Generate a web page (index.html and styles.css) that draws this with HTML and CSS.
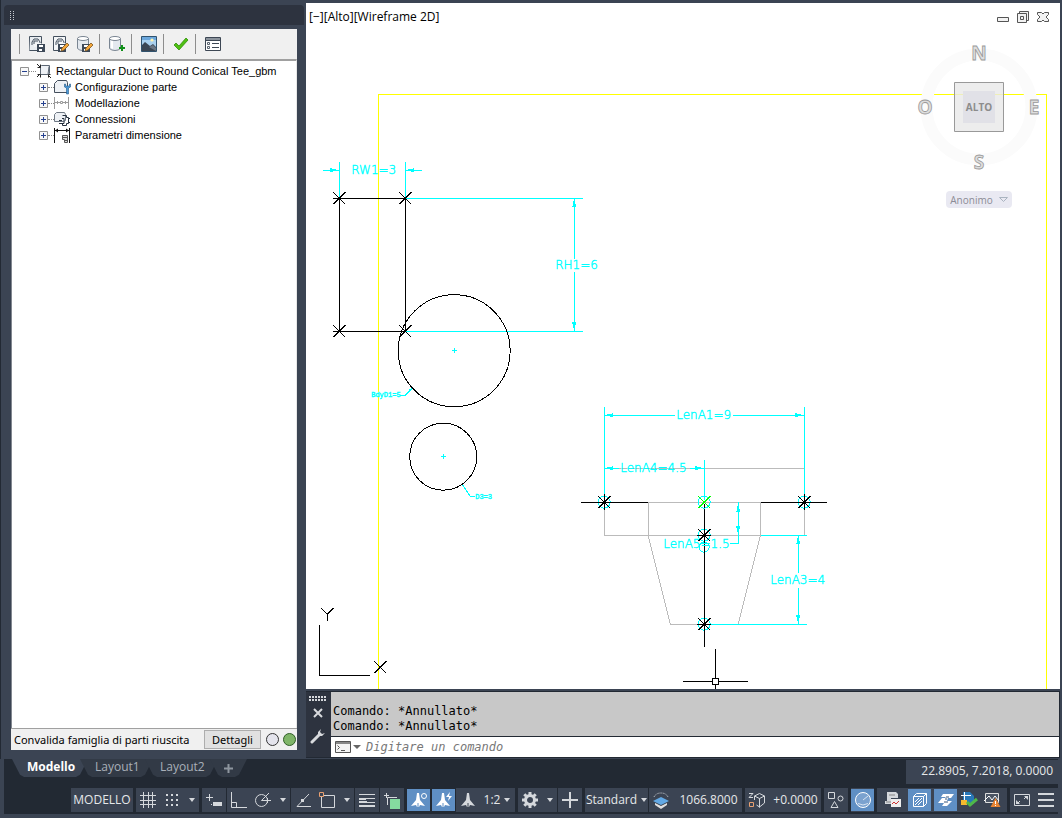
FILE: index.html
```html
<!DOCTYPE html>
<html lang="it">
<head>
<meta charset="utf-8">
<title>Editor parti</title>
<link rel="stylesheet" href="styles.css">
</head>
<body>
<main class="workspace">
  <aside class="palette">
    <div class="palette-title">
      <svg width="4" height="10" viewBox="0 0 4 10" fill="#c8ccd2"><path d="M0 0h1v1H0zM3 0h1v1H3zM0 2h1v1H0zM3 2h1v1H3zM0 4h1v1H0zM3 4h1v1H3zM0 6h1v1H0zM3 6h1v1H3zM0 8h1v1H0zM3 8h1v1H3z"/></svg>
    </div>
    <div class="palette-body">
      <div class="toolbar">
        <span class="sep"></span>
        <button class="tool" aria-label="Salva famiglia"><svg width="16" height="16" viewBox="0 0 16 16"><path d="M.5 14.500V.5h12v7" fill="#f4f6f8" stroke="#44505e"/><path d="M.5 14.500H8V11H5V7h7V1H1z" fill="#e9edf1"/><path d="M.5 14.500H8M3 9V6l2-3h4l2 3v1M5 8V5h4" fill="none" stroke="#44505e"/><path d="M8 8h8v8H8z" fill="#3d4958"/><path d="M10 9h4v2h-4zM10 13h3v2h-3z" fill="#fff"/></svg></button>
        <button class="tool" aria-label="Salva con nome"><svg width="16" height="16" viewBox="0 0 16 16"><path d="M.5 14.500V.5h12v7" fill="#f4f6f8" stroke="#44505e"/><path d="M.5 14.500H5M3 9V6l2-3h4l2 3v1M5 8V5h4" fill="none" stroke="#44505e"/><path d="M5 8h8v8H5z" fill="#3d4958"/><path d="M7 9h4v2H7zM7 13h3v2H7z" fill="#fff"/><path d="M9 12l5-5 2 2-5 5-3 1z" fill="#f4a63a" stroke="#7a5420" stroke-width=".8"/></svg></button>
        <button class="tool" aria-label="Salva copia catalogo"><svg width="16" height="16" viewBox="0 0 16 16"><path d="M.5 2.500v10q2 2 5 2h6v-12" fill="#e3e8ee" stroke="#7a8592"/><ellipse cx="6" cy="2.500" rx="5.500" ry="2" fill="#fff" stroke="#7a8592"/><path d="M5 8h8v8H5z" fill="#3d4958"/><path d="M7 9h4v2H7zM7 13h3v2H7z" fill="#fff"/><path d="M9 12l5-5 2 2-5 5-3 1z" fill="#f4a63a" stroke="#7a5420" stroke-width=".8"/></svg></button>
        <span class="sep"></span>
        <button class="tool" aria-label="Aggiungi dimensione"><svg width="16" height="16" viewBox="0 0 16 16"><path d="M.5 2.500v10q2 2 5.500 2t5.500-2v-10" fill="#e3e8ee" stroke="#7a8592"/><path d="M2 4v8l2 1V5z" fill="#fff"/><ellipse cx="6" cy="2.500" rx="5.500" ry="2" fill="#fff" stroke="#7a8592"/><path d="M12 9h2v2h2v2h-2v2h-2v-2h-2v-2h2z" fill="#109018"/></svg></button>
        <span class="sep"></span>
        <button class="tool" aria-label="Genera bitmap"><svg width="16" height="16" viewBox="0 0 16 16"><path d="M.5 .5h15v15H.5z" fill="#a9d0ee" stroke="#31536e"/><path d="M1 1h14v3H1z" fill="#6ba7dc"/><circle cx="11" cy="4" r="1.600" fill="#fff3b0"/><path d="M1 9l3-3 5 4 3-2 3 3v4H1z" fill="#3b4653"/><path d="M8 11l4-2 3 3v3z" fill="#6b7683"/></svg></button>
        <span class="sep"></span>
        <button class="tool" aria-label="Convalida"><svg width="16" height="16" viewBox="0 0 16 16"><path d="M1 9l2-2 3 3 7-8 2 2-9 10z" fill="#4fc012" stroke="#2f9108" stroke-width=".8"/></svg></button>
        <span class="sep"></span>
        <button class="tool" aria-label="Opzioni"><svg width="16" height="16" viewBox="0 0 16 16"><path d="M.5 1.500h15v13H.5z" fill="#fff" stroke="#3d4754"/><path d="M1 2h14v2H1z" fill="#8b939c"/><path d="M1 4.500h14" stroke="#3d4754"/><path d="M2.500 6.500h2v2h-2zM2.500 10.500h2v2h-2z" fill="#fff" stroke="#59636f"/><path d="M7 7.500h7M7 11.500h7" stroke="#3d4754"/></svg></button>
      </div>
      <div class="tree-box">
        <ul class="tree">
          <li>
            <div class="node"><button class="twist" aria-label="Comprimi"><svg width="9" height="9" viewBox="0 0 9 9"><path d="M.5 .5h8v8h-8z" fill="#f8f8f8" stroke="#919191"/><path d="M2 4.500h5" stroke="#26418f"/></svg></button><span class="dots"></span>
              <svg width="17" height="16" viewBox="0 0 17 16"><path d="M4.500 3.500l1-1h8v8l-2 1h-7z" fill="#eef1f5" stroke="#5c6774"/><path d="M5 11.500h7l1-8" fill="none" stroke="#5c6774"/><path d="M1 1l3 3M1 14l3-3M15 15l-3-3M1.500 4.500h3v-3M1.500 11.500h3v3M14.500 11.500h-2v3" fill="none" stroke="#222"/></svg>
              <span class="name">Rectangular Duct to Round Conical Tee_gbm</span></div>
            <ul class="branch">
              <li class="node"><button class="twist" aria-label="Espandi"><svg width="9" height="9" viewBox="0 0 9 9"><path d="M.5 .5h8v8h-8z" fill="#f8f8f8" stroke="#919191"/><path d="M2 4.500h5M4.500 2v5" stroke="#26418f"/></svg></button><span class="dots short"></span>
                <svg width="17" height="16" viewBox="0 0 17 16"><path d="M.5 4.500l3-3h9l1 2v10H.5z" fill="#eef1f5" stroke="#444f5c"/><path d="M10.500 5v3l2 1v6h2V9l2-1V5h-1v2h-4V5z" fill="#4d9bd8" stroke="#245a8b" stroke-width=".6"/></svg>
                <span class="name">Configurazione parte</span></li>
              <li class="node"><button class="twist" aria-label="Espandi"><svg width="9" height="9" viewBox="0 0 9 9"><path d="M.5 .5h8v8h-8z" fill="#f8f8f8" stroke="#919191"/><path d="M2 4.500h5M4.500 2v5" stroke="#26418f"/></svg></button><span class="dots short"></span>
                <svg width="17" height="16" viewBox="0 0 17 16"><path d="M.5 2v12M14.500 2v12M1 7.500h5M9 7.500h5M3.500 6v3M11.500 6v3M6.500 6.500h2v2h-2z" fill="none" stroke="#9b9b9b"/></svg>
                <span class="name">Modellazione</span></li>
              <li class="node"><button class="twist" aria-label="Espandi"><svg width="9" height="9" viewBox="0 0 9 9"><path d="M.5 .5h8v8h-8z" fill="#f8f8f8" stroke="#919191"/><path d="M2 4.500h5M4.500 2v5" stroke="#26418f"/></svg></button><span class="dots short"></span>
                <svg width="17" height="16" viewBox="0 0 17 16"><path d="M.5 3.500l2-2h8l1 2v6l-2 1h-9z" fill="#eef1f5" stroke="#6d7783"/><path d="M8.500 4.500h4v2h2v6h-2v2h-4v-2M5 9.500h3M5 12.500h5v-5H8M14.500 7.500H16M14.500 11.500H16" fill="none" stroke="#26313e"/></svg>
                <span class="name">Connessioni</span></li>
              <li class="node"><button class="twist" aria-label="Espandi"><svg width="9" height="9" viewBox="0 0 9 9"><path d="M.5 .5h8v8h-8z" fill="#f8f8f8" stroke="#919191"/><path d="M2 4.500h5M4.500 2v5" stroke="#26418f"/></svg></button><span class="dots short"></span>
                <svg width="17" height="16" viewBox="0 0 17 16"><path d="M.5 1v15M15.500 1v15M1 3.500h14" stroke="#111"/><path d="M1 3.500l3-2v4zM15 3.500l-3-2v4z" fill="#111"/><path d="M8.500 8.500h5v7h-3v-3h-2z" fill="#ddd" stroke="#555"/><path d="M9 10.500h4M11 13.500h2" stroke="#555"/></svg>
                <span class="name">Parametri dimensione</span></li>
            </ul>
          </li>
        </ul>
      </div>
      <div class="palette-status">
        <span class="message">Convalida famiglia di parti riuscita</span>
        <button class="details">Dettagli</button>
        <span class="lamp"></span><span class="lamp on"></span>
      </div>
    </div>
  </aside>

  <section class="stage">
    <div class="viewport">
      <svg class="drawing" viewBox="305.800 2.800 754 686" preserveAspectRatio="xMinYMin meet" fill="none" shape-rendering="crispEdges">
        <defs>
          <path id="star" d="M-6-6L6 6M-6 6L6-6"/>
          <g id="joint"><circle r="6" stroke="#0ff"/><path d="M-6-6L6 6M-6 6L6-6M0-8V8M-7 0H7" stroke="#000"/></g>
          <path id="tip" d="M0 0L9-2V2z" fill="#0ff"/>
        </defs>
        <path d="M378 689V94H1046V689" stroke="#ff0"/>
        <g stroke="#bbb">
          <path d="M604 468H804M604 502V535H804V502M648 502H760V536L738 624H670L648 536z"/>
        </g>
        <g stroke="#0ff">
          <path d="M339 162V198M405 162V198M323 170H339M405 170H422M406 198H583M406 331H583M574 198V259M574 272V331"/>
          <path d="M452 350H457M454 348V353M441 456H446M443 454V459"/>
          <path d="M400 395H405L412 388M409 390l3-2M462 484L470 496H475"/>
          <path d="M604 407V500M804 407V500M604 415H675M733 415H804M604 468H619M690 468H704M704 460V500"/>
          <path d="M738 502V543H730M761 535H807M706 624H807M798 535V573M798 588V624"/>
          <ellipse cx="704" cy="547" rx="5" ry="5"/>
        </g>
        <use href="#tip" transform="translate(339 170) rotate(180)"/><use href="#tip" x="405" y="170"/>
        <use href="#tip" transform="translate(574 198) rotate(90)"/><use href="#tip" transform="translate(574 331) rotate(-90)"/>
        <use href="#tip" x="604" y="415"/><use href="#tip" transform="translate(804 415) rotate(180)"/>
        <use href="#tip" x="604" y="468"/><use href="#tip" transform="translate(704 468) rotate(180)"/>
        <use href="#tip" transform="translate(738 503) rotate(90)"/><use href="#tip" transform="translate(738 535) rotate(-90)"/>
        <use href="#tip" transform="translate(798 535) rotate(90)"/><use href="#tip" transform="translate(798 624) rotate(-90)"/>
        <g stroke="#000">
          <path d="M333 198H405V331H333M339 198V331"/>
          <circle cx="454" cy="350.500" r="56"/><circle cx="443" cy="456.500" r="33.500"/>
          <use href="#star" x="339" y="198"/><use href="#star" x="405" y="198"/><use href="#star" x="339" y="331"/><use href="#star" x="405" y="331"/>
          <path d="M581 502H648M761 502H827M704 504V647M683 681H712M718 681H748M715 649V678M715 684V689M712 678H718V684H712z"/>
          <path d="M319 625V675H370M321 608L327 614L333 608M327 614V621M374 661L386 673M374 673L386 661"/>
        </g>
        <use href="#joint" x="604" y="502"/><use href="#joint" x="804" y="502"/><use href="#joint" x="704" y="535"/><use href="#joint" x="704" y="624"/>
        <circle cx="704" cy="502" r="6" stroke="#0ff"/><use href="#star" x="704" y="502" stroke="#0f0"/>
        <g class="dim">
          <text x="351" y="174">RW1=3</text><text x="555" y="269">RH1=6</text>
          <text x="676" y="419">LenA1=9</text><text x="620" y="472">LenA4=4.5</text>
          <text x="663" y="548">LenA5=1.5</text><text x="770" y="584">LenA3=4</text>
        </g>
        <g class="dim tiny"><text x="371" y="397">BdyD1=5</text><text x="475" y="499">D3=3</text></g>
      </svg>
      <header class="view-bar">
        <div class="view-labels"><button>[−]</button><button>[Alto]</button><button>[Wireframe 2D]</button></div>
        <div class="view-buttons">
          <button aria-label="Riduci a icona"><svg width="14" height="14" viewBox="0 0 14 14"><path d="M1.500 7.500h11v4h-11z" fill="#f2f2f2" stroke="#555"/></svg></button>
          <button aria-label="Ripristina"><svg width="14" height="14" viewBox="0 0 14 14" fill="#f2f2f2" stroke="#555"><path d="M3.500 1.500h9v9h-9z"/><path d="M1.500 3.500h9v9h-9z"/><path d="M4.500 6.500h3v3h-3z"/></svg></button>
          <button aria-label="Chiudi"><svg width="14" height="14" viewBox="0 0 14 14"><path d="M1.500 2.500h4L7 4l1.500-1.500h4v2L10 7l2.500 2.500v2h-4L7 10l-1.500 1.500h-4v-2L4 7 1.500 4.500z" fill="#f2f2f2" stroke="#555"/></svg></button>
        </div>
      </header>
      <div class="compass">
        <svg width="130" height="142" viewBox="914 36 130 142">
          <circle cx="979" cy="107" r="52.500" fill="none" stroke="#fbfbfb" stroke-width="12"/>
          <path d="M954.500 82.500h49v49h-49z" fill="#ededed" stroke="#999"/>
          <path d="M955 94.500h48" stroke="#eeeeb8"/>
          <path d="M963 91h32v32h-32z" fill="#e1e1e7"/>
          <text class="face" x="979" y="111">ALTO</text>
          <g class="winds"><text x="979" y="60">N</text><text x="979" y="169">S</text><text x="925" y="114">O</text><text x="1034" y="114">E</text></g>
        </svg>
        <button class="ucs">Anonimo <svg width="9" height="6" viewBox="0 0 9 6"><path d="M.5 .5h8l-4 4z" fill="none" stroke="#aab4c0"/></svg></button>
      </div>
    </div>
    <div class="command">
      <div class="handle">
        <svg width="17" height="5" viewBox="0 0 17 5"><path d="M0 1h17M0 4h17" stroke="#d5d8dc" stroke-width="2" stroke-dasharray="2 1"/></svg>
        <button aria-label="Chiudi riga di comando"><svg width="10" height="10" viewBox="0 0 10 10"><path d="M1 1l8 8M9 1L1 9" stroke="#d8dadd" stroke-width="2"/></svg></button>
        <button aria-label="Personalizza"><svg width="16" height="16" viewBox="0 0 16 16"><path d="M2 14l7-7" stroke="#d8dadd" stroke-width="3" stroke-linecap="round"/><path d="M11 1L8 4v4h4l3-3-3 1-2-2z" fill="#d8dadd"/></svg></button>
      </div>
      <div class="console">
        <div class="history"><p>Comando: *Annullato*</p><p>Comando: *Annullato*</p></div>
        <label class="prompt">
          <svg width="26" height="12" viewBox="0 0 26 12"><path d="M.5 .5h15v11H.5z" fill="#f4f4f4" stroke="#555"/><path d="M1 1h14v2H1z" fill="#888"/><path d="M2.500 4.500l2 2-2 2M6 9.500h4" fill="none" stroke="#555"/><path d="M18 4h8l-4 4z" fill="#666"/></svg>
          <input type="text" aria-label="Comando" placeholder="Digitare un comando">
        </label>
      </div>
    </div>
  </section>
</main>

<footer class="footer">
  <div class="tabs-row">
    <nav class="tabs">
      <button class="tab active">Modello</button><button class="tab">Layout1</button><button class="tab">Layout2</button><button class="tab add" aria-label="Nuovo layout"><svg width="9" height="9" viewBox="0 0 9 9"><path d="M0 4.500h9M4.500 0v9" stroke="#8e969f" stroke-width="2"/></svg></button>
    </nav>
    <output class="coords">22.8905, 7.2018, 0.0000</output>
  </div>
  <div class="status">
    <div class="group"><button class="w62">MODELLO</button></div>
    <div class="group">
      <button aria-label="Griglia"><svg width="16" height="16" viewBox="0 0 16 16"><path d="M0 3.500h16M0 8.500h16M0 12.500h16M3.500 0v16M8.500 0v16M12.500 0v16" stroke="#d5d8dc"/></svg></button>
      <button aria-label="Snap"><svg width="14" height="14" viewBox="0 0 14 14"><path d="M1 2h12M1 7h12M1 12h12" stroke="#d5d8dc" stroke-width="2" stroke-dasharray="2 3"/></svg></button>
      <button class="w15" aria-label="Opzioni snap"><i class="caret"></i></button>
    </div>
    <div class="group"><button aria-label="Input dinamico"><svg width="18" height="16" viewBox="0 0 18 16"><path d="M1 5.500h7M4.500 2v7" stroke="#d5d8dc"/><path d="M8 10h9v4H8z" fill="#d5d8dc"/><path d="M6 12.500h1" stroke="#d5d8dc"/></svg></button></div>
    <div class="group close">
      <button aria-label="Orto"><svg width="18" height="16" viewBox="0 0 18 16" fill="none" stroke="#d5d8dc"><path d="M1.500 0v15.500H17M1.500 10.500h5v5"/></svg></button>
      <button aria-label="Polare"><svg width="18" height="16" viewBox="0 0 18 16" fill="none" stroke="#d5d8dc"><circle cx="7.500" cy="8.500" r="6"/><path d="M7.500 8.500L15 1M7.500 8.500H17M13.500 6v5"/></svg></button>
      <button class="w15" aria-label="Opzioni polare"><i class="caret"></i></button>
    </div>
    <div class="group close">
      <button aria-label="Isodraft"><svg width="18" height="16" viewBox="0 0 18 16" fill="none" stroke="#d5d8dc"><path d="M15 2L3 14.500h14"/><path d="M7 7h3v3H7z" fill="#d5d8dc" stroke="none"/></svg></button>
      <button aria-label="Snap oggetto"><svg width="18" height="17" viewBox="0 0 18 17" fill="none"><path d="M3.500 3.500h13v12h-13z" stroke="#d5d8dc"/><path d="M1.500 .5h4v4h-4z" fill="#3b4453" stroke="#e8a071"/></svg></button>
      <button class="w15" aria-label="Opzioni snap oggetto"><i class="caret"></i></button>
    </div>
    <div class="group close"><button aria-label="Spessore linea"><svg width="16" height="14" viewBox="0 0 16 14" stroke="#d5d8dc"><path d="M0 1.500h16M0 5.500h16"/><path d="M0 6h7M0 9h8M0 13h16" stroke-width="2"/><path d="M0 9.500h16"/></svg></button></div>
    <div class="group close"><button aria-label="Selezione ciclica"><svg width="17" height="17" viewBox="0 0 17 17"><path d="M0 3.500h5M2.500 1v5M3.500 13V5.500H13" fill="none" stroke="#d5d8dc"/><path d="M6 7h10v10H6z" fill="#85dca0"/></svg></button></div>
    <div class="group wide">
      <button class="on w23" aria-label="Visibilità annotazioni"><svg width="18" height="18" viewBox="0 0 18 18"><path d="M7 2l2 0 1 7 5 6-5-1-1 2h-2l-1-2-5 1 5-6z" fill="#fff"/><path d="M8 12v5" stroke="#5f8fc4"/><circle cx="14" cy="5" r="2.500" fill="none" stroke="#fff"/></svg></button>
      <button class="on w23" aria-label="Scala automatica"><svg width="18" height="18" viewBox="0 0 18 18"><path d="M7 2l2 0 1 7 5 6-5-1-1 2h-2l-1-2-5 1 5-6z" fill="#fff"/><path d="M8 12v5" stroke="#5f8fc4"/><path d="M15 1l-4 5h3l-1 4 4-5h-3z" fill="#fff"/></svg></button>
    </div>
    <div class="group close">
      <button class="w23" aria-label="Annotazione"><svg width="16" height="18" viewBox="0 0 16 18"><path d="M7 2l2 0 1 7 5 6-5-1-1 2h-2l-1-2-5 1 5-6z" fill="#d5d8dc"/><path d="M8 12v5" stroke="#3b4453"/></svg></button>
      <button class="w36">1:2 <i class="caret"></i></button>
    </div>
    <div class="group">
      <button aria-label="Area di lavoro"><svg width="16" height="16" viewBox="0 0 16 16"><circle cx="8" cy="8" r="4.500" fill="none" stroke="#d5d8dc" stroke-width="3"/><path d="M8 0v3M8 13v3M0 8h3M13 8h3M2.300 2.300l2 2M11.700 11.700l2 2M2.300 13.700l2-2M11.700 4.300l2-2" stroke="#d5d8dc" stroke-width="3"/></svg></button>
      <button class="w15" aria-label="Opzioni area di lavoro"><i class="caret"></i></button>
    </div>
    <div class="group close"><button aria-label="Monitor annotazioni"><svg width="16" height="16" viewBox="0 0 16 16"><path d="M0 8h16M8 0v16" stroke="#d5d8dc" stroke-width="2"/></svg></button></div>
    <div class="group"><button class="w63">Standard <i class="caret"></i></button></div>
    <div class="group close"><button class="w93"><svg width="16" height="17" viewBox="0 0 16 17"><path d="M1 5q2-4 7-4t7 4" fill="none" stroke="#d5d8dc" stroke-dasharray="1 1"/><path d="M2 11l6 3 6-3v2l-6 4-6-4z" fill="#e0e0e0"/><path d="M0 9l8-4 8 4-8 4z" fill="#62a8e4"/></svg><span>1066.8000</span></button></div>
    <div class="group"><button class="w76"><svg width="17" height="17" viewBox="0 0 17 17" fill="none" stroke="#d5d8dc"><path d="M1 1.500h4L1 5.500h4M6.500 4l5-2.500 5 2.500v7l-5 4-3-2M6.500 4l5 2.500 5-2.500M11.500 6.500v9M6.500 4v4"/><path d="M1.500 10.500h4v4h-4z" stroke="#e8a071"/></svg><span>+0.0000</span></button></div>
    <div class="group"><button aria-label="Isola oggetti"><svg width="18" height="18" viewBox="0 0 18 18" fill="none" stroke="#d5d8dc"><path d="M1.500 1.500h6v6h-6zM7.500 10.500l3.500 6H4z"/><circle cx="13.500" cy="7.500" r="2.500"/></svg></button></div>
    <div class="group"><button class="on w23" aria-label="Prestazioni"><svg width="18" height="18" viewBox="0 0 18 18" fill="none" stroke="#fff"><circle cx="9" cy="9" r="7.500" fill="#7ba2cf"/><path d="M9 9l5-4M4 12.500q5 3 10 0" stroke="#d7e4f2"/></svg></button></div>
    <div class="group tail">
      <button class="w31" aria-label="Proprietà rapide"><svg width="18" height="18" viewBox="0 0 18 18"><path d="M3 1h9l2 2v4H7v6H1v-3h2z" fill="#d5d8dc"/><path d="M5 4h6M2 11h5" stroke="#888"/><path d="M7 8h10v8H7z" fill="#eee"/><path d="M8 13l2-2 2 2 3-3" fill="none" stroke="#c33"/></svg></button>
      <button class="on w23" aria-label="Blocca interfaccia"><svg width="16" height="16" viewBox="0 0 16 16" fill="none" stroke="#fff"><path d="M1.500 4.500h10v10h-10zM1.500 4.500l3-3h10v10l-3 3M11.500 4.500l3-3M3 10l4-4M3 13l7-7M6 13l4-4"/></svg></button>
      <button class="on w23 spaced" aria-label="Accelerazione grafica"><svg width="18" height="18" viewBox="0 0 18 18"><path d="M6 3h11l-3 4h-3l-1 3h5l-5 5H5l2-3H1l4-5h3l1-1H4z" fill="#fff"/><path d="M9 6h3M7 11h4M8 8h2" stroke="#39577b"/></svg></button>
      <button class="w23" aria-label="Associazione standard"><svg width="18" height="18" viewBox="0 0 18 18"><path d="M3 1h7l4 4v8H3z" fill="#2878b8"/><path d="M1 4.500h10M4.500 1v8" stroke="#fff"/><path d="M1 9h6v5H1z" fill="#f4b92e"/><path d="M7 11l3 3 7-6" fill="none" stroke="#4fb84a" stroke-width="3"/></svg></button>
      <button class="w23" aria-label="Avviso"><svg width="18" height="18" viewBox="0 0 18 18"><path d="M2.500 2.500h13v9h-13z" fill="#4c5665" stroke="#ddd"/><path d="M1 10l5-5 3 4 3-4 4 5" fill="none" stroke="#fff"/><path d="M12.500 7l5 9h-10z" fill="#e88332"/><path d="M12.500 10v3M12.500 14v1" stroke="#fff"/></svg></button>
    </div>
    <div class="group">
      <button aria-label="Schermo intero"><svg width="16" height="14" viewBox="0 0 16 14"><path d="M.5 1.500h15v11H.5z" fill="none" stroke="#d5d8dc"/><path d="M10 3h4v4zM2 7v4h4z" fill="#d5d8dc"/><path d="M10 6l3-3M3 11l3-3" stroke="#d5d8dc"/></svg></button>
      <button aria-label="Personalizzazione"><svg width="16" height="14" viewBox="0 0 16 14"><path d="M0 1h16M0 7h16M0 13h16" stroke="#d5d8dc" stroke-width="2"/></svg></button>
    </div>
  </div>
</footer>
</body>
</html>
```

FILE: styles.css
```css
* { box-sizing: border-box; }
body {
  margin: 0;
  min-height: 100vh;
  display: flex;
  flex-direction: column;
  background: #3b4453;
  color: #000;
  font: 12px/16px "Open Sans", "Noto Sans", sans-serif;
}
button {
  margin: 0;
  padding: 0;
  border: 0;
  background: none;
  color: inherit;
  font: inherit;
  white-space: nowrap;
}
svg { display: block; flex: none; }

.workspace { flex: 1; display: flex; min-height: 0; }

/* tool palette */
.palette {
  flex: 0 0 306px;
  display: flex;
  flex-direction: column;
  padding: 5px 2px 8px 3px;
  border-left: 1px solid #222933;
}
.palette-title {
  height: 20px;
  padding: 6px;
  border-radius: 4px 4px 0 0;
  background: #2d333f;
}
.palette-body {
  flex: 1;
  display: flex;
  flex-direction: column;
  padding: 4px 7px 1px;
}
.toolbar {
  display: flex;
  align-items: center;
  gap: 8px;
  height: 30px;
  padding: 0 8px;
  background: #f0f0f0;
}
.sep { width: 1px; height: 20px; margin-right: 1px; background: #8d8d8d; }
.tool + .sep { margin-left: -2px; }
.tree-box {
  flex: 1;
  border-top: 2px solid #a0a0a0;
  border-right: 1px solid #e8e8e8;
  border-left: 1px solid #828790;
  background: #fff;
}
.tree, .branch { margin: 0; padding: 0; list-style: none; }
.tree { padding: 2px 8px; font: 11px/16px "Liberation Sans", Arial, sans-serif; }
.branch { margin-left: 19px; }
.node { display: flex; align-items: center; height: 16px; }
.name { margin-left: 3px; white-space: nowrap; }
.branch .name { margin-left: 4px; }
.dots { width: 7px; height: 1px; border-top: 1px dotted #888; }
.dots.short { width: 6px; }
.palette-status {
  display: flex;
  align-items: center;
  height: 22px;
  padding: 0 1px 0 3px;
  background: #f0f0f0;
  border-top: 1px solid #a0a0a0;
  font: 11px/16px "Noto Sans", sans-serif;
}
.message { flex: 1; white-space: nowrap; }
.details {
  width: 57px;
  height: 19px;
  margin-right: 1px;
  border: 1px solid #adadad;
  background: #e1e1e1;
}
.lamp {
  width: 13px;
  height: 13px;
  margin-left: 4px;
  border: 1px solid #333;
  border-radius: 50%;
  background: #e4e4ec;
}
.lamp.on { border-color: #2f5d27; background: #7fb568; }

/* drawing area */
.stage { flex: 1; display: flex; flex-direction: column; min-width: 0; padding: 3px 2px 1px 0; }
.viewport { position: relative; flex: 1; background: #fff; overflow: hidden; }
.drawing { position: absolute; inset: 0; width: 100%; height: 100%; }
.dim { fill: #0ff; stroke: #0ff; stroke-width: .4px; font: 12px "DejaVu Sans Light", "DejaVu Sans", sans-serif; }
.dim.tiny { font: 7px "Liberation Mono", monospace; }
.view-bar { position: absolute; top: 6px; left: 3px; right: 10px; display: flex; justify-content: space-between; }
.view-labels { display: flex; }
.view-buttons { display: flex; gap: 6px; }
.compass {
  position: absolute;
  top: 33px;
  right: 16px;
  display: flex;
  flex-direction: column;
  align-items: center;
}
.face { fill: #8c8c8c; font: bold 10px "Open Sans", sans-serif; text-anchor: middle; }
.winds { fill: #dedede; stroke: #999; stroke-width: .8px; font: bold 19px "Open Sans", sans-serif; text-anchor: middle; }
.ucs {
  display: flex;
  align-items: center;
  gap: 6px;
  height: 17px;
  margin-top: 13px;
  padding: 0 4px;
  border-radius: 4px;
  background: #e9e9f2;
  color: #8c8c96;
  font-size: 10px;
}

/* command line */
.command {
  display: flex;
  margin-top: 2px;
  border: solid #222933;
  border-width: 1px 1px 1px 0;
  background: #222933;
}
.handle {
  flex: 0 0 25px;
  display: flex;
  flex-direction: column;
  align-items: center;
  padding: 4px 2px 0 0;
  background: #2d333f;
}
.handle button { height: 10px; margin-top: 7px; }
.handle button + button { height: 16px; margin-top: 10px; }
.console { flex: 1; min-width: 0; font: 12px/15px "DejaVu Sans Mono", monospace; }
.history { padding: 12px 2px 2px; background: #c8c8c8; }
.history p { margin: 0; }
.prompt {
  display: flex;
  align-items: center;
  gap: 5px;
  height: 20px;
  margin-top: 1px;
  padding: 0 4px;
  background: #fff;
}
.prompt input { flex: 1; min-width: 0; padding: 0; border: 0; outline: 0; background: none; font: inherit; }
.prompt input::placeholder { color: #777; font-style: italic; opacity: 1; }

/* layout tabs and status bar */
.footer { margin: 0 4px 4px; padding-bottom: 2px; background: #222933; color: #e6e8ea; }
.tabs-row { display: flex; justify-content: space-between; height: 29px; padding-left: 8px; }
.tabs { display: flex; align-items: flex-start; }
.tab {
  width: 73px;
  height: 18px;
  padding: 0 15px 2px;
  background: #323a46;
  color: #a9b0b9;
  clip-path: polygon(0 0, 100% 0, calc(100% - 8px) 88%, calc(100% - 12px) 100%, 12px 100%, 8px 88%);
}
.tab.active { width: 76px; background: #3b4453; color: #fff; font-weight: bold; }
.tab + .tab { margin-left: -8px; }
.tab.add { width: 37px; padding: 0 14px; }
.coords { height: 24px; margin-top: 1px; padding: 3px 5px 3px 15px; background: #3b4453; white-space: nowrap; }
.status { display: flex; justify-content: flex-end; gap: 1px; }
.group { display: flex; height: 24px; margin-left: 2px; background: #3b4453; }
.group.close { margin-left: 0; }
.group.wide { gap: 2px; background: none; }
.group.tail { padding-right: 4px; }
.group button {
  display: flex;
  align-items: center;
  justify-content: center;
  gap: 4px;
  width: 24px;
}
.group .on { height: 22px; margin-top: 1px; background: #5f8fc4; }
.group .spaced { margin-left: 3px; }
.group .w15 { width: 15px; }
.group .w23 { width: 23px; }
.group .w31 { width: 31px; }
.group .w36 { width: 36px; }
.group .w62 { width: 62px; }
.group .w63 { width: 63px; }
.group .w76 { width: 76px; gap: 8px; }
.group .w93 { width: 93px; gap: 10px; }
.caret { border: solid transparent; border-width: 4px 3px 0; border-top-color: #d5d8dc; }
```
